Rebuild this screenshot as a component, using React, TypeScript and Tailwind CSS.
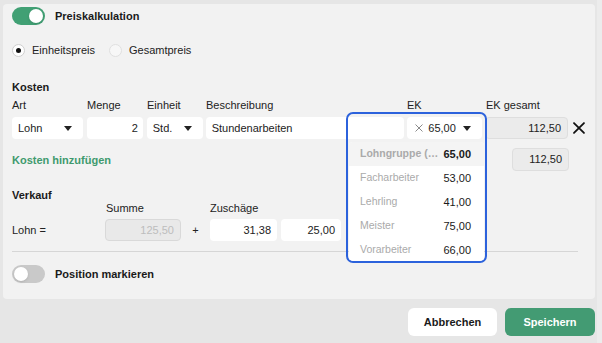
import React from "react";

const Caret = () => (
  <svg width="8" height="5" viewBox="0 0 8 5" className="shrink-0">
    <path d="M0 0h8L4 5z" fill="#222" />
  </svg>
);

const Toggle = ({ on }: { on: boolean }) => (
  <div
    className={`w-[33px] h-[18px] rounded-full flex items-center px-[2px] ${
      on ? "bg-[#41a074] justify-end" : "bg-[#c9c9c9] justify-start"
    }`}
  >
    <div className="w-[14px] h-[14px] rounded-full bg-white shadow-sm" />
  </div>
);

const Radio = ({ checked, label }: { checked: boolean; label: string }) => (
  <div className="flex items-center gap-[7px]">
    <div
      className={`w-[13px] h-[13px] rounded-full border flex items-center justify-center ${
        checked ? "bg-white border-[#cfcfcf]" : "bg-[#f7f7f7] border-[#e0e0e0]"
      }`}
    >
      {checked && <div className="w-[5px] h-[5px] rounded-full bg-[#111]" />}
    </div>
    <span className="text-[#222]">{label}</span>
  </div>
);

const options = [
  { label: "Lohngruppe (…", value: "65,00", active: true },
  { label: "Facharbeiter", value: "53,00" },
  { label: "Lehrling", value: "41,00" },
  { label: "Meister", value: "75,00" },
  { label: "Vorarbeiter", value: "66,00" },
];

export default function App() {
  return (
    <div className="w-[602px] h-[343px] bg-[#e6e6e6] flex font-['Liberation_Sans',Arial,sans-serif] text-[11px] text-[#222] overflow-hidden">
      <div className="flex-1 flex flex-col">
        {/* Panel */}
        <div className="relative ml-[3px] mt-[4px] w-[592px] h-[295px] bg-[#f2f2f2] rounded-[4px] px-[9px] flex flex-col">
          <div className="mt-[3px] h-[18px] flex items-center gap-[10px]">
            <Toggle on />
            <span className="font-bold text-[#1a1a1a]">Preiskalkulation</span>
          </div>

          <div className="mt-[18px] h-[14px] flex items-center gap-[14px]">
            <Radio checked label="Einheitspreis" />
            <Radio checked={false} label="Gesamtpreis" />
          </div>

          <div className="mt-[22px] h-[16px] flex items-center font-bold text-[#1a1a1a]">
            Kosten
          </div>

          <div className="mt-[3px] h-[14px] flex items-center">
            <span className="w-[75px]">Art</span>
            <span className="w-[60px]">Menge</span>
            <span className="w-[59px]">Einheit</span>
            <span className="w-[201px]">Beschreibung</span>
            <span className="w-[79px]">EK</span>
            <span>EK gesamt</span>
          </div>

          <div className="mt-[5px] h-[22px] flex items-center">
            <div className="w-[71px] h-full bg-white rounded-[4px] flex items-center justify-between pl-[6px] pr-[11px]">
              <span>Lohn</span>
              <Caret />
            </div>
            <div className="ml-[4px] w-[56px] h-full bg-white rounded-[4px] flex items-center justify-end pr-[5px]">
              2
            </div>
            <div className="ml-[4px] w-[56px] h-full bg-white rounded-[4px] flex items-center justify-between pl-[6px] pr-[11px]">
              <span>Std.</span>
              <Caret />
            </div>
            <div className="ml-[3px] w-[199px] h-full bg-white rounded-[4px] flex items-center pl-[6px]">
              Stundenarbeiten
            </div>
            <div className="ml-[3px] w-[75px] h-full bg-white rounded-[4px] flex items-center pl-[8px] pr-[11px]">
              <svg width="8" height="8" viewBox="0 0 8 8" className="shrink-0">
                <path d="M0.5 0.5l7 7M7.5 0.5l-7 7" stroke="#8a8a8a" strokeWidth="1" />
              </svg>
              <span className="ml-[5px] flex-1">65,00</span>
              <Caret />
            </div>
            <div className="ml-[3px] w-[83px] h-full bg-[#ebebeb] border border-[#dedede] rounded-[4px] flex items-center justify-end pr-[6px]">
              112,50
            </div>
            <svg width="14" height="14" viewBox="0 0 14 14" className="ml-[4px]">
              <path d="M2 2l10 10M12 2L2 12" stroke="#111" strokeWidth="1.8" strokeLinecap="round" />
            </svg>
          </div>

          <div className="mt-[9px] h-[23px] flex items-center justify-between pr-[17px]">
            <span className="font-bold text-[#3f9a6e] pt-[2px]">Kosten hinzufügen</span>
            <div className="w-[57px] h-full bg-[#ebebeb] border border-[#dedede] rounded-[4px] flex items-center justify-end pr-[6px]">
              112,50
            </div>
          </div>

          <div className="mt-[17px] h-[14px] flex items-center font-bold text-[#1a1a1a]">
            Verkauf
          </div>

          <div className="h-[13px] flex items-center">
            <span className="ml-[94px] w-[104px]">Summe</span>
            <span>Zuschäge</span>
          </div>

          <div className="mt-[4px] h-[22px] flex items-center">
            <span className="w-[93px]">Lohn =</span>
            <div className="w-[76px] h-full bg-[#e9e9e9] border border-[#d9d9d9] rounded-[4px] flex items-center justify-end pr-[6px] text-[#bdbdbd]">
              125,50
            </div>
            <span className="w-[29px] text-center">+</span>
            <div className="w-[67px] h-full bg-white rounded-[4px] flex items-center justify-end pr-[6px]">
              31,38
            </div>
            <div className="ml-[4px] w-[60px] h-full bg-white rounded-[4px] flex items-center justify-end pr-[6px]">
              25,00
            </div>
          </div>

          <div className="mt-[10px] h-px bg-[#d6d6d6] mr-[8px]" />

          <div className="mt-[13px] h-[18px] flex items-center gap-[10px]">
            <Toggle on={false} />
            <span className="font-bold text-[#1a1a1a]">Position markieren</span>
          </div>

          {/* Focused EK select with dropdown */}
          <div className="absolute left-[343px] top-[108px] w-[141px] h-[151px] border-2 border-[#2c62dc] rounded-[7px] overflow-hidden">
            <div className="absolute left-px right-px top-[28px] bg-white rounded-t-[4px]">
              {options.map((o) => (
                <div
                  key={o.label}
                  className={`h-[24px] flex items-center pl-[11px] pr-[13px] ${
                    o.active ? "bg-[#f4f4f4] rounded-t-[4px] font-bold" : ""
                  }`}
                >
                  <span className="text-[#aaaaaa] text-[10.5px] whitespace-nowrap">{o.label}</span>
                  <span className="ml-auto text-[#1a1a1a]">{o.value}</span>
                </div>
              ))}
            </div>
          </div>
        </div>

        {/* Footer */}
        <div className="mt-[9px] flex justify-end gap-[8px] pr-[2px]">
          <button className="w-[89px] h-[28px] bg-white rounded-[6px] font-bold text-[#1a1a1a]">
            Abbrechen
          </button>
          <button className="w-[90px] h-[28px] bg-[#439b73] rounded-[6px] font-bold text-white">
            Speichern
          </button>
        </div>
      </div>
      <div className="w-[5px] bg-[#ececec]" />
    </div>
  );
}
